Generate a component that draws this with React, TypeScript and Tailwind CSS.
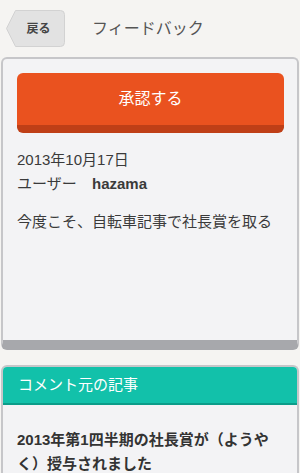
import React from "react";

export default function App() {
  const font = { fontFamily: '"Liberation Sans", "Noto Sans CJK JP", sans-serif' };
  return (
    <div className="w-[300px] h-[473px] overflow-hidden bg-[#f5f4f2] text-[#3c3c3c]" style={font}>
      {/* header */}
      <div className="h-[57px] flex items-center">
        <button className="relative ml-[6px] w-[59px] h-[37px] flex items-center justify-center">
          <svg className="absolute inset-0" width="59" height="37" viewBox="0 0 59 37">
            <path
              d="M9.5 0.5 H54.5 Q58.5 0.5 58.5 4.5 V32.5 Q58.5 36.5 54.5 36.5 H9.5 L0.5 18.5 Z"
              fill="#e2e2e2"
              stroke="#d2d2d2"
              strokeWidth="1"
            />
          </svg>
          <span className="relative pl-[6px] text-[12px] font-bold text-[#454545]">戻る</span>
        </button>
        <div className="ml-[27px] text-[16px] text-[#555555]">フィードバック</div>
      </div>

      {/* feedback card */}
      <div className="mx-px h-[293px] rounded-[6px] border-x-2 border-t-2 border-b-[10px] border-x-[#c6c6c9] border-t-[#c6c6c9] border-b-[#a7a8ac] bg-[#f3f3f5] pl-[14px] pr-[13px] pt-[14px]">
        <button className="w-full h-[60px] rounded-[6px] bg-[#ea521f] border-b-[8px] border-[#bf3f17] flex items-center justify-center text-white text-[16px]">
          承認する
        </button>
        <div className="mt-[15px] text-[15px] leading-[24px] text-[#3a3a3a]">
          <div>2013年10月17日</div>
          <div className="flex">
            <span className="w-[75px]">ユーザー</span>
            <span className="font-bold">hazama</span>
          </div>
          <div className="mt-[14px]">今度こそ、自転車記事で社長賞を取る</div>
        </div>
      </div>

      {/* source article card */}
      <div className="mx-px mt-[15px] rounded-t-[6px] border-x-2 border-t-2 border-[#c6c6c9] bg-[#f3f3f5] h-[120px]">
        <div className="h-[38px] bg-[#12c1aa] rounded-t-[4px] border-b-2 border-[#0b9c89] flex items-center pl-[15px] text-white text-[15px]">
          コメント元の記事
        </div>
        <div className="pl-[14px] pr-[10px] pt-[23px] text-[15px] leading-[24px] font-bold text-[#333333]">
          <div className="whitespace-nowrap">2013年第1四半期の社長賞が（ようや</div>
          <div className="whitespace-nowrap">く）授与されました</div>
        </div>
      </div>
    </div>
  );
}
